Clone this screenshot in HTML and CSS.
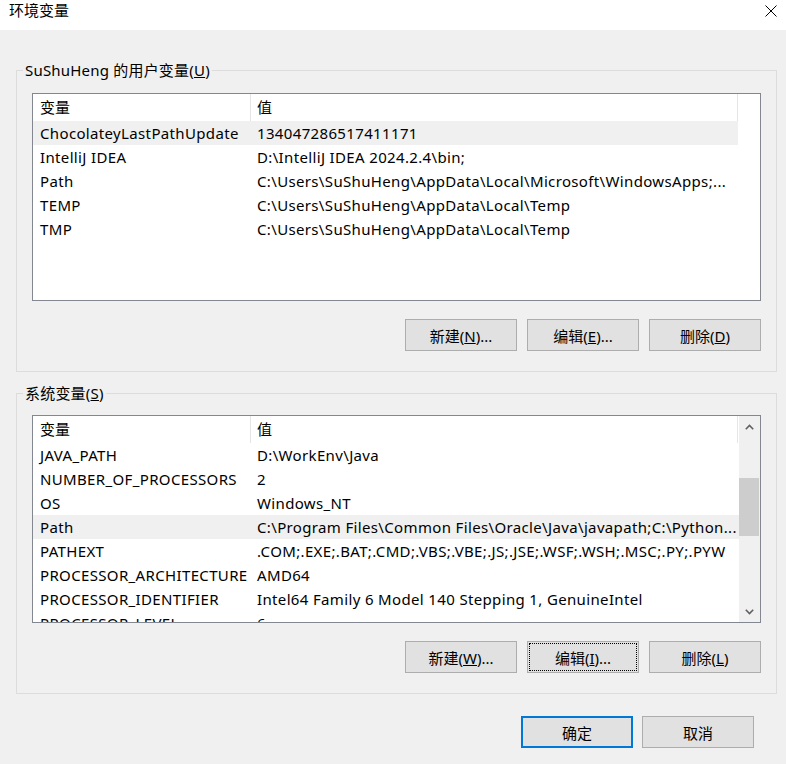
FILE: index.html
```html
<!DOCTYPE html>
<html lang="zh-CN">
<head>
<meta charset="utf-8">
<title>环境变量</title>
<link rel="stylesheet" href="styles.css">
</head>
<body>
<div class="titlebar">
  <span class="title">环境变量</span>
  <svg class="close" width="12" height="12" viewBox="0 0 12 12"><path d="M0.5 0.5 L11.5 11.5 M11.5 0.5 L0.5 11.5" stroke="#000" stroke-width="1" fill="none"/></svg>
</div>

<div class="group group-user">
  <div class="legend">SuShuHeng 的用户变量(<u>U</u>)</div>
  <div class="list list-user">
    <div class="cols">
      <div class="row head"><div class="c1">变量</div><div class="c2">值</div></div>
      <div class="row sel"><div class="c1">ChocolateyLastPathUpdate</div><div class="c2">134047286517411171</div></div>
      <div class="row"><div class="c1">IntelliJ IDEA</div><div class="c2">D:\IntelliJ IDEA 2024.2.4\bin;</div></div>
      <div class="row"><div class="c1">Path</div><div class="c2">C:\Users\SuShuHeng\AppData\Local\Microsoft\WindowsApps;...</div></div>
      <div class="row"><div class="c1">TEMP</div><div class="c2">C:\Users\SuShuHeng\AppData\Local\Temp</div></div>
      <div class="row"><div class="c1">TMP</div><div class="c2">C:\Users\SuShuHeng\AppData\Local\Temp</div></div>
    </div>
  </div>
  <div class="btns">
    <button class="btn">新建(<u>N</u>)...</button>
    <button class="btn">编辑(<u>E</u>)...</button>
    <button class="btn">删除(<u>D</u>)</button>
  </div>
</div>

<div class="group group-sys">
  <div class="legend">系统变量(<u>S</u>)</div>
  <div class="list list-sys">
    <div class="cols">
      <div class="row head"><div class="c1">变量</div><div class="c2">值</div></div>
      <div class="row"><div class="c1">JAVA_PATH</div><div class="c2">D:\WorkEnv\Java</div></div>
      <div class="row"><div class="c1">NUMBER_OF_PROCESSORS</div><div class="c2">2</div></div>
      <div class="row"><div class="c1">OS</div><div class="c2">Windows_NT</div></div>
      <div class="row sel"><div class="c1">Path</div><div class="c2">C:\Program Files\Common Files\Oracle\Java\javapath;C:\Python...</div></div>
      <div class="row"><div class="c1">PATHEXT</div><div class="c2">.COM;.EXE;.BAT;.CMD;.VBS;.VBE;.JS;.JSE;.WSF;.WSH;.MSC;.PY;.PYW</div></div>
      <div class="row"><div class="c1">PROCESSOR_ARCHITECTURE</div><div class="c2">AMD64</div></div>
      <div class="row"><div class="c1">PROCESSOR_IDENTIFIER</div><div class="c2">Intel64 Family 6 Model 140 Stepping 1, GenuineIntel</div></div>
      <div class="row"><div class="c1">PROCESSOR_LEVEL</div><div class="c2">6</div></div>
    </div>
    <div class="scrollbar">
      <div class="sb-btn"><svg width="9" height="6" viewBox="0 0 9 6"><path d="M0.8 5.2 L4.5 1.5 L8.2 5.2" stroke="#606060" stroke-width="1.6" fill="none"/></svg></div>
      <div class="sb-track"><div class="sb-thumb"></div></div>
      <div class="sb-btn"><svg width="9" height="6" viewBox="0 0 9 6"><path d="M0.8 0.8 L4.5 4.5 L8.2 0.8" stroke="#606060" stroke-width="1.6" fill="none"/></svg></div>
    </div>
  </div>
  <div class="btns">
    <button class="btn">新建(<u>W</u>)...</button>
    <button class="btn focus">编辑(<u>I</u>)...</button>
    <button class="btn">删除(<u>L</u>)</button>
  </div>
</div>

<div class="footer">
  <button class="btn default">确定</button>
  <button class="btn">取消</button>
</div>
</body>
</html>
```

FILE: styles.css
```css
* { box-sizing: border-box; }
html, body { margin: 0; padding: 0; }
body {
  width: 786px;
  height: 764px;
  overflow: hidden;
  background: #f0f0f0;
  color: #000;
  font-family: "Noto Sans", "Noto Sans CJK SC", sans-serif;
  font-size: 15px;
}
.titlebar {
  height: 30px;
  background: #fff;
  display: flex;
  justify-content: space-between;
  align-items: flex-start;
  padding: 0 9px 0 9px;
}
.title { line-height: 20px; margin-top: 0; }
.close { margin-top: 5px; display: block; }

.group {
  margin-left: 16px;
  width: 761px;
  border: 1px solid #dcdcdc;
  padding: 0 15px 20px 15px;
}
.group-user { margin-top: 40px; }
.group-sys { margin-top: 21px; }
.legend {
  width: fit-content;
  line-height: 20px;
  margin: -11px 0 0 -9px;
  padding: 0 2px;
  background: #f0f0f0;
  white-space: nowrap;
  letter-spacing: 0.2px;
}
.list {
  height: 208px;
  border: 1px solid #828790;
  background: #fff;
  overflow: hidden;
  display: flex;
}
.list-user { margin-top: 13px; }
.list-sys { margin-top: 12px; }
.cols { width: 706px; overflow: hidden; }
.list-user .cols { width: 705px; }
.row {
  display: flex;
  height: 24px;
  line-height: 24px;
  white-space: nowrap;
  letter-spacing: 0.35px;
}
.row.head { height: 27px; line-height: 27px; letter-spacing: 0; }
.row.sel { background: #f0f0f0; }
.c1 { width: 218px; flex: none; padding-left: 7px; overflow: hidden; }
.c2 { width: 487px; flex: none; padding-left: 6px; overflow: hidden; }
.head .c1 { border-right: 1px solid #e5e5e5; }
.head .c2 { border-right: 1px solid #e5e5e5; }

.scrollbar {
  width: 21px;
  flex: none;
  background: #f0f0f0;
  display: flex;
  flex-direction: column;
}
.sb-btn {
  height: 21px;
  display: flex;
  align-items: center;
  justify-content: center;
}
.sb-btn svg { display: block; }
.sb-track { flex: 1; }
.sb-thumb {
  margin-top: 41px;
  height: 58px;
  margin-right: 1px;
  background: #cdcdcd;
}

.btns {
  display: flex;
  justify-content: flex-end;
  gap: 10px;
  margin-top: 18px;
}
.btn {
  width: 112px;
  height: 32px;
  background: #e1e1e1;
  border: 1px solid #adadad;
  border-radius: 0;
  font-family: inherit;
  font-size: 15px;
  color: #000;
  padding: 0;
  margin: 0;
}
.btn.focus { outline: 1px dotted #000; outline-offset: -3px; }
.footer {
  display: flex;
  justify-content: flex-end;
  gap: 9px;
  margin-top: 22px;
  padding-right: 32px;
}
.btn.default { border: 2px solid #0078d7; }
```
